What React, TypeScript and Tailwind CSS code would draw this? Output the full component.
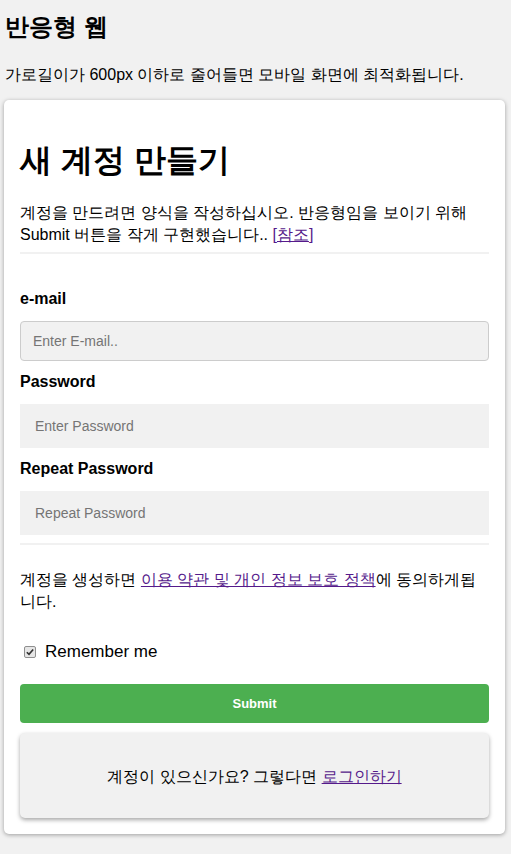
import React from 'react'

const font = { fontFamily: '"Liberation Sans", Arial, "DejaVu Sans", sans-serif' }

const Field: React.FC<{ label: string; placeholder: string; bordered?: boolean; type?: string }> = ({
  label,
  placeholder,
  bordered,
  type = 'text',
}) => (
  <div>
    <label className="block text-[16px] leading-[20px] font-bold text-black">{label}</label>
    {bordered ? (
      <input
        type={type}
        placeholder={placeholder}
        className="mt-[12px] block w-full h-[40px] px-[12px] bg-[#f1f1f1] border border-[#cccccc] rounded-[4px] text-[14px] placeholder:text-[#757575] outline-none"
      />
    ) : (
      <input
        type={type}
        placeholder={placeholder}
        className="mt-[12px] block w-full h-[44px] px-[15px] bg-[#f1f1f1] text-[14px] placeholder:text-[#757575] outline-none"
      />
    )}
  </div>
)

export default function App() {
  return (
    <div className="min-h-[854px] bg-[#f1f1f1] pl-[4px] pr-[6px] pb-[20px] text-black" style={font}>
      <h2 className="pt-[12px] pl-[1px] text-[24px] leading-[30px] font-bold">반응형 웹</h2>
      <p className="mt-[23px] pl-[1px] text-[16px] leading-[20px]">
        가로길이가 600px 이하로 줄어들면 모바일 화면에 최적화됩니다.
      </p>

      <div className="mt-[15px] bg-white rounded-[5px] shadow-[0_1px_4px_rgba(0,0,0,0.35)] px-[16px] pt-[40px] pb-[16px]">
        <h1 className="text-[32px] leading-[40px] font-bold">새 계정 만들기</h1>
        <p className="mt-[22px] text-[16px] leading-[22px]">
          계정을 만드려면 양식을 작성하십시오. 반응형임을 보이기 위해 Submit 버튼을 작게 구현했습니다..{' '}
          <a className="text-[#551a8b]">
            [<span className="underline">참조</span>]
          </a>
        </p>
        <hr className="mt-[6px] border-0 h-[2px] bg-[#f1f1f1]" />

        <div className="mt-[35px]">
          <Field label="e-mail" placeholder="Enter E-mail.." bordered />
        </div>
        <div className="mt-[11px]">
          <Field label="Password" placeholder="Enter Password" type="password" />
        </div>
        <div className="mt-[11px]">
          <Field label="Repeat Password" placeholder="Repeat Password" type="password" />
        </div>
        <hr className="mt-[8px] border-0 h-[2px] bg-[#f1f1f1]" />

        <p className="mt-[24px] text-[16px] leading-[22px]">
          계정을 생성하면 <a className="underline text-[#551a8b]">이용 약관 및 개인 정보 보호 정책</a>에 동의하게됩니다.
        </p>

        <label className="mt-[28px] flex items-center h-[22px] pl-[4px]">
          <span className="flex items-center justify-center w-[12px] h-[12px] rounded-[2px] border border-[#8f8f8f] bg-[#e6e6e6]">
            <svg viewBox="0 0 12 12" className="w-[10px] h-[10px]">
              <path d="M2.2 6.3 L4.8 8.8 L9.8 3" fill="none" stroke="#333" strokeWidth="2" />
            </svg>
          </span>
          <span className="ml-[9px] text-[17px] leading-[22px]">Remember me</span>
        </label>

        <button className="mt-[21px] w-full h-[39px] rounded-[4px] bg-[#4caf50] text-white text-[13px] font-bold">
          Submit
        </button>

        <div className="mt-[10px] h-[85px] flex items-center justify-center bg-[#f1f1f1] rounded-[5px] shadow-[0_2px_4px_rgba(0,0,0,0.35)]">
          <p className="text-[16px] leading-[22px] pt-[2px]">
            계정이 있으신가요? 그렇다면 <a className="underline text-[#551a8b]">로그인하기</a>
          </p>
        </div>
      </div>
    </div>
  )
}
